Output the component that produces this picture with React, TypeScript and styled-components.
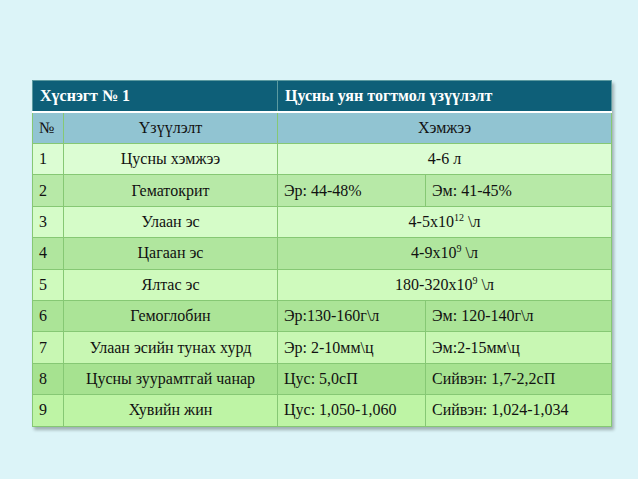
import React from 'react';
import styled, { createGlobalStyle } from 'styled-components';

const serif = `"Liberation Serif", "Times New Roman", "DejaVu Serif", serif`;

const GlobalStyle = createGlobalStyle`
    html, body {
        margin: 0;
        padding: 0;
        background: #dcf4f8;
    }
    table, th, td {
        font-family: ${serif};
    }
`;

const Page = styled.div`
    width: 638px;
    height: 479px;
    box-sizing: border-box;
    padding: 80px 0 0 32px;
    background: #dcf4f8;
    font-family: ${serif};
`;

const Table = styled.table`
    width: 579px;
    border-collapse: collapse;
    table-layout: fixed;
    font-size: 16px;
    box-shadow: 2px 3px 3px rgba(0, 0, 0, 0.28);
    border: 1px solid #86c874;
`;

const HeadCell = styled.th`
    height: 30px;
    padding: 0 7px;
    background: #0e5f78;
    color: #ffffff;
    font-size: 16px;
    font-weight: bold;
    text-align: left;
    border: 1px solid #5c9aa0;
    border-bottom: 2px solid #ffffff;
`;

const SubCell = styled.td<{ $center?: boolean }>`
    height: 30px;
    padding: 0 6px;
    background: #91c4d2;
    color: #111;
    font-size: 16px;
    text-align: ${(p) => (p.$center ? 'center' : 'left')};
    border: 1px solid #86c874;
    border-top: none;
`;

const Row = styled.tr<{ $bg: string }>`
    background: ${(p) => p.$bg};
`;

const Cell = styled.td<{ $center?: boolean }>`
    height: 30.4px;
    padding: 0 6px;
    color: #111;
    font-size: 16px;
    white-space: nowrap;
    text-align: ${(p) => (p.$center ? 'center' : 'left')};
    border: 1px solid #86c874;
`;

const Sup = styled.sup`
    font-size: 10px;
    vertical-align: 6px;
    line-height: 0;
`;

type Item = {
    name: string;
    value?: React.ReactNode;
    male?: string;
    female?: string;
};

const items: Item[] = [
    { name: 'Цусны хэмжээ', value: '4-6 л' },
    { name: 'Гематокрит', male: 'Эр: 44-48%', female: 'Эм: 41-45%' },
    { name: 'Улаан эс', value: <>4-5x10<Sup>12</Sup> \л</> },
    { name: 'Цагаан эс', value: <>4-9x10<Sup>9</Sup> \л</> },
    { name: 'Ялтас эс', value: <>180-320x10<Sup>9</Sup> \л</> },
    { name: 'Гемоглобин', male: 'Эр:130-160г\\л', female: 'Эм: 120-140г\\л' },
    { name: 'Улаан эсийн тунах хурд', male: 'Эр: 2-10мм\\ц', female: 'Эм:2-15мм\\ц' },
    { name: 'Цусны зуурамтгай чанар', male: 'Цус: 5,0сП', female: 'Сийвэн: 1,7-2,2сП' },
    { name: 'Хувийн жин', male: 'Цус: 1,050-1,060', female: 'Сийвэн: 1,024-1,034' },
];

const rowColors = [
    '#dcfdd3',
    '#b7e9a7',
    '#d5fcc8',
    '#b0e69e',
    '#cffabd',
    '#abe497',
    '#c8f7b3',
    '#a6e290',
    '#bef4a5',
];

const App: React.FC = () => {
    return (
        <Page>
            <GlobalStyle />
            <Table>
                <colgroup>
                    <col style={{ width: 31 }} />
                    <col style={{ width: 214 }} />
                    <col style={{ width: 148 }} />
                    <col style={{ width: 186 }} />
                </colgroup>
                <thead>
                    <tr>
                        <HeadCell colSpan={2}>Хүснэгт № 1</HeadCell>
                        <HeadCell colSpan={2}>Цусны уян тогтмол үзүүлэлт</HeadCell>
                    </tr>
                </thead>
                <tbody>
                    <tr>
                        <SubCell>№</SubCell>
                        <SubCell $center>Үзүүлэлт</SubCell>
                        <SubCell $center colSpan={2}>Хэмжээ</SubCell>
                    </tr>
                    {items.map((item, i) => (
                        <Row key={i} $bg={rowColors[i]}>
                            <Cell>{i + 1}</Cell>
                            <Cell $center>{item.name}</Cell>
                            {item.value !== undefined ? (
                                <Cell $center colSpan={2}>{item.value}</Cell>
                            ) : (
                                <>
                                    <Cell>{item.male}</Cell>
                                    <Cell>{item.female}</Cell>
                                </>
                            )}
                        </Row>
                    ))}
                </tbody>
            </Table>
        </Page>
    );
};

export default App;
